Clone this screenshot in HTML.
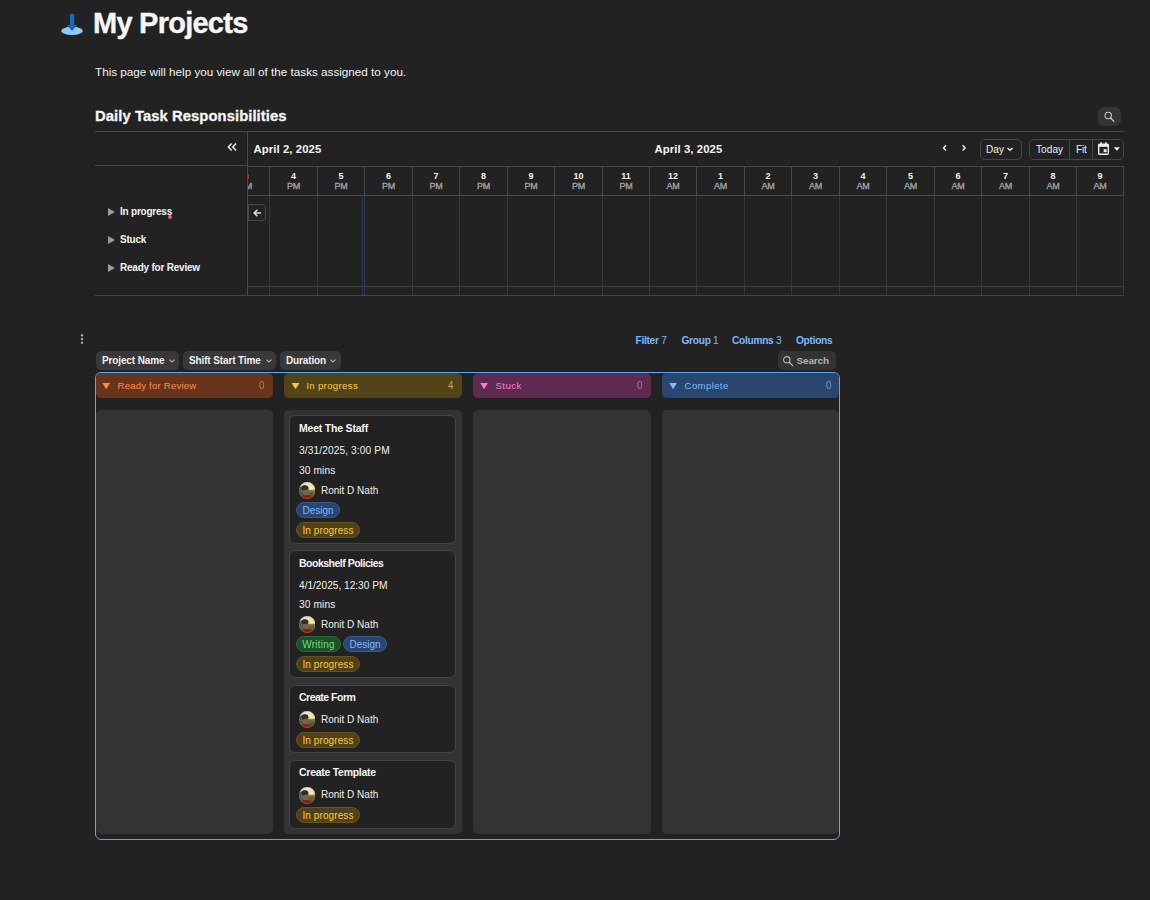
<!DOCTYPE html>
<html lang="en">
<head>
<meta charset="utf-8">
<title>My Projects</title>
<style>
*{box-sizing:border-box;margin:0;padding:0}
html,body{width:1150px;height:900px;overflow:hidden;background:#222222;color:#f2f2f2;
 font-family:"Liberation Sans",sans-serif;}
.a{position:absolute;white-space:nowrap}
.b{font-weight:bold}
.hl{position:absolute;height:1px;background:#464646}
.vl{position:absolute;width:1px;background:#3e3e3e}
/* gantt */
.th{position:absolute;top:171px;width:47px;text-align:center;font-size:9px;line-height:10px;font-weight:bold;color:#f2f2f2}
.th span{display:block;font-weight:normal;color:#a4a4a4;margin-top:0px;-webkit-text-stroke:0.3px #a4a4a4;letter-spacing:-0.2px}
.grp{position:absolute;left:120px;font-size:10px;font-weight:bold;line-height:14px;letter-spacing:-0.22px;color:#f5f5f5}
.tri{position:absolute;left:108px;width:0;height:0;border-left:7px solid #9c9c9c;border-top:4px solid transparent;border-bottom:4px solid transparent}
/* board */
.tb{position:absolute;top:334px;font-size:10.2px;line-height:13px;font-weight:bold;color:#7ab8ff;letter-spacing:-0.3px}
.tb i{font-style:normal;font-weight:normal}
.pill{position:absolute;top:351px;height:19px;border-radius:5px;background:#383838;font-size:10px;line-height:19px;font-weight:bold;color:#f0f0f0;padding-left:6px;letter-spacing:-0.13px}
.colh{position:absolute;top:373px;height:25px;width:177px;border-radius:5px;font-size:10px;line-height:25px}
.colh .t{position:absolute;left:6.2px;top:9.7px;width:8px;height:6.5px;background:currentColor;clip-path:polygon(0 0,100% 0,50% 100%)}
.colh .n{position:absolute;left:21.5px;top:0;font-size:9.6px;letter-spacing:0.2px}
.colh .c{position:absolute;right:8.5px;top:0;opacity:.72}
.colb{position:absolute;top:410px;height:424px;width:177px;border-radius:5px;background:#333333}
.card{position:absolute;left:289px;width:167px;background:#222222;border:1px solid #444444;border-radius:6px}
.card .ti{position:absolute;left:9px;top:5px;font-size:10.5px;font-weight:bold;line-height:14px;letter-spacing:-0.2px;color:#f5f5f5}
.card .tx{position:absolute;left:9px;font-size:10.2px;line-height:14px;color:#f0f0f0;letter-spacing:0.1px}
.card .av{position:absolute;left:9px;width:16.4px;height:16.9px}
.card .nm{position:absolute;left:31px;font-size:10px;line-height:14px;color:#f0f0f0}
.tag{position:absolute;height:16px;border-radius:8px;font-size:10px;line-height:16px;text-align:center;border:1px solid}
.tg-d{background:#2a466f;border-color:#375a8b;color:#78b6ff}
.tg-w{background:#1d5229;border-color:#2a6b37;color:#6fdc7f;letter-spacing:0.2px}
.tg-p{background:#504118;border-color:#67541f;color:#ffc83a;letter-spacing:0.1px}
</style>
</head>
<body>
<!-- ===== Title ===== -->
<svg class="a" style="left:60px;top:12px" width="24" height="24" viewBox="0 0 24 24">
  <ellipse cx="12.05" cy="18.9" rx="10.85" ry="4.1" fill="#90caf9"/>
  <rect x="9.9" y="2" width="4.3" height="11.6" fill="#1868cb"/>
  <path d="M6.9 13.1 L17.2 13.1 L12.05 18.9 Z" fill="#1565c0"/>
</svg>
<div class="a b" style="left:93px;top:5px;font-size:29px;line-height:36px;letter-spacing:-0.75px;color:#f7f7f7;-webkit-text-stroke:0.4px #f7f7f7">My Projects</div>
<div class="a" style="left:95px;top:64px;font-size:11.7px;line-height:16px;color:#f2f2f2">This page will help you view all of the tasks assigned to you.</div>

<!-- ===== Gantt ===== -->
<div class="a b" style="left:95px;top:106px;font-size:14.8px;line-height:20px;letter-spacing:0.07px;-webkit-text-stroke:0.3px #f5f5f5;color:#f5f5f5">Daily Task Responsibilities</div>
<div class="a" style="left:1098px;top:107px;width:23px;height:19px;border-radius:6px;background:#343434">
  <svg width="23" height="19" viewBox="0 0 23 19"><circle cx="10.2" cy="8.5" r="3.2" fill="none" stroke="#c8c8c8" stroke-width="1.1"/><path d="M12.6 11 L15.8 14.2" stroke="#c8c8c8" stroke-width="1.3" stroke-linecap="round"/></svg>
</div>
<div class="hl" style="left:95px;top:131px;width:1029px"></div>
<div class="hl" style="left:95px;top:165px;width:153px"></div>
<div class="hl" style="left:248px;top:166px;width:876px"></div>
<div class="hl" style="left:248px;top:195px;width:876px;background:#484848"></div>
<div class="hl" style="left:248px;top:286px;width:876px;background:#424242"></div>
<div class="hl" style="left:95px;top:295px;width:1029px"></div>
<div class="vl" style="left:247px;top:131px;height:165px;background:#4a4a4a"></div>
<div class="vl" style="left:269px;top:166px;height:30px;background:#484848"></div><div class="vl" style="left:269px;top:196px;height:99px;background:#383838"></div>
<div class="vl" style="left:317px;top:166px;height:30px;background:#484848"></div><div class="vl" style="left:317px;top:196px;height:99px;background:#383838"></div>
<div class="vl" style="left:364px;top:166px;height:30px;background:#484848"></div><div class="vl" style="left:364px;top:196px;height:99px;background:#383838"></div>
<div class="vl" style="left:412px;top:166px;height:30px;background:#484848"></div><div class="vl" style="left:412px;top:196px;height:99px;background:#383838"></div>
<div class="vl" style="left:459px;top:166px;height:30px;background:#484848"></div><div class="vl" style="left:459px;top:196px;height:99px;background:#383838"></div>
<div class="vl" style="left:507px;top:166px;height:30px;background:#484848"></div><div class="vl" style="left:507px;top:196px;height:99px;background:#383838"></div>
<div class="vl" style="left:554px;top:166px;height:30px;background:#484848"></div><div class="vl" style="left:554px;top:196px;height:99px;background:#383838"></div>
<div class="vl" style="left:602px;top:166px;height:30px;background:#484848"></div><div class="vl" style="left:602px;top:196px;height:99px;background:#383838"></div>
<div class="vl" style="left:649px;top:166px;height:30px;background:#484848"></div><div class="vl" style="left:649px;top:196px;height:99px;background:#383838"></div>
<div class="vl" style="left:696px;top:166px;height:30px;background:#484848"></div><div class="vl" style="left:696px;top:196px;height:99px;background:#383838"></div>
<div class="vl" style="left:744px;top:166px;height:30px;background:#484848"></div><div class="vl" style="left:744px;top:196px;height:99px;background:#383838"></div>
<div class="vl" style="left:791px;top:166px;height:30px;background:#484848"></div><div class="vl" style="left:791px;top:196px;height:99px;background:#383838"></div>
<div class="vl" style="left:839px;top:166px;height:30px;background:#484848"></div><div class="vl" style="left:839px;top:196px;height:99px;background:#383838"></div>
<div class="vl" style="left:886px;top:166px;height:30px;background:#484848"></div><div class="vl" style="left:886px;top:196px;height:99px;background:#383838"></div>
<div class="vl" style="left:934px;top:166px;height:30px;background:#484848"></div><div class="vl" style="left:934px;top:196px;height:99px;background:#383838"></div>
<div class="vl" style="left:981px;top:166px;height:30px;background:#484848"></div><div class="vl" style="left:981px;top:196px;height:99px;background:#383838"></div>
<div class="vl" style="left:1029px;top:166px;height:30px;background:#484848"></div><div class="vl" style="left:1029px;top:196px;height:99px;background:#383838"></div>
<div class="vl" style="left:1076px;top:166px;height:30px;background:#484848"></div><div class="vl" style="left:1076px;top:196px;height:99px;background:#383838"></div>
<div class="vl" style="left:1123px;top:166px;height:30px;background:#484848"></div><div class="vl" style="left:1123px;top:196px;height:99px;background:#383838"></div>
<div class="th" style="left:270px;width:47px">4<span>PM</span></div>
<div class="th" style="left:318px;width:46px">5<span>PM</span></div>
<div class="th" style="left:365px;width:47px">6<span>PM</span></div>
<div class="th" style="left:413px;width:46px">7<span>PM</span></div>
<div class="th" style="left:460px;width:47px">8<span>PM</span></div>
<div class="th" style="left:508px;width:46px">9<span>PM</span></div>
<div class="th" style="left:555px;width:47px">10<span>PM</span></div>
<div class="th" style="left:603px;width:46px">11<span>PM</span></div>
<div class="th" style="left:650px;width:46px">12<span>AM</span></div>
<div class="th" style="left:697px;width:47px">1<span>AM</span></div>
<div class="th" style="left:745px;width:46px">2<span>AM</span></div>
<div class="th" style="left:792px;width:47px">3<span>AM</span></div>
<div class="th" style="left:840px;width:46px">4<span>AM</span></div>
<div class="th" style="left:887px;width:47px">5<span>AM</span></div>
<div class="th" style="left:935px;width:46px">6<span>AM</span></div>
<div class="th" style="left:982px;width:47px">7<span>AM</span></div>
<div class="th" style="left:1030px;width:46px">8<span>AM</span></div>
<div class="th" style="left:1077px;width:46px">9<span>AM</span></div>
<!-- partial 3 PM column clipped -->
<div class="a" style="left:248px;top:167px;width:21px;height:28px;overflow:hidden">
  <div class="th" style="left:-26px;top:4px">3<span>PM</span></div>
</div>
<div class="a" style="left:248px;top:174px;width:1px;height:5px;background:#b8402a;opacity:.75"></div>
<!-- today line -->
<div class="vl" style="left:362px;top:196px;height:99px;background:#1c3761"></div>
<!-- header controls -->
<svg class="a" style="left:226px;top:141px" width="12" height="12" viewBox="0 0 12 12"><path d="M5.7 2.4 L2.3 5.9 L5.7 9.4 M10.1 2.4 L6.7 5.9 L10.1 9.4" fill="none" stroke="#ececec" stroke-width="1.5"/></svg>
<div class="a b" style="left:253.5px;top:142px;font-size:11.3px;line-height:14px;letter-spacing:0.1px;color:#f5f5f5">April 2, 2025</div>
<div class="a b" style="left:654.5px;top:142px;font-size:11.3px;line-height:14px;letter-spacing:0.1px;color:#f5f5f5">April 3, 2025</div>
<svg class="a" style="left:940px;top:143px" width="30" height="10" viewBox="0 0 30 10"><path d="M6 2.2 L3.5 4.9 L6 7.6" fill="none" stroke="#e6e6e6" stroke-width="1.5"/><path d="M22.6 2.2 L25.1 4.9 L22.6 7.6" fill="none" stroke="#e6e6e6" stroke-width="1.5"/></svg>
<div class="a" style="left:980px;top:139px;width:42px;height:21px;border:1px solid #454545;border-radius:5px"></div>
<div class="a" style="left:986px;top:143px;font-size:10px;line-height:13px;letter-spacing:0.1px;color:#f0f0f0">Day</div>
<svg class="a" style="left:1005px;top:146px" width="9" height="7" viewBox="0 0 9 7"><path d="M2.5 1.9 L5 4.3 L7.5 1.9" fill="none" stroke="#e6e6e6" stroke-width="1.4"/></svg>
<div class="a" style="left:1029px;top:139px;width:95px;height:21px;border:1px solid #454545;border-radius:5px"></div>
<div class="vl" style="left:1069px;top:140px;height:19px;background:#454545"></div>
<div class="vl" style="left:1092px;top:140px;height:19px;background:#454545"></div>
<div class="a" style="left:1036px;top:143px;font-size:10px;line-height:13px;letter-spacing:0.1px;color:#f0f0f0">Today</div>
<div class="a" style="left:1076px;top:143px;font-size:10px;line-height:13px;letter-spacing:-0.2px;color:#f0f0f0">Fit</div>
<svg class="a" style="left:1097px;top:141px" width="26" height="16" viewBox="0 0 26 16"><rect x="1.7" y="3.2" width="9.6" height="10" rx="1" fill="none" stroke="#f0f0f0" stroke-width="1.4"/><rect x="1.7" y="3.2" width="9.6" height="2.6" fill="#f0f0f0"/><rect x="3.4" y="1.2" width="1.4" height="2.4" fill="#f0f0f0"/><rect x="8.2" y="1.2" width="1.4" height="2.4" fill="#f0f0f0"/><rect x="6.6" y="8.2" width="3" height="3" fill="#f0f0f0"/><path d="M16.8 6.3 L22.9 6.3 L19.85 9.7 Z" fill="#f0f0f0"/></svg>
<!-- groups -->
<div class="tri" style="top:208px"></div><div class="grp" style="top:205px">In progress</div>
<div class="tri" style="top:236px"></div><div class="grp" style="top:233px">Stuck</div>
<div class="tri" style="top:264px"></div><div class="grp" style="top:261px">Ready for Review</div>
<div class="a" style="left:168px;top:215.4px;width:4px;height:4px;border-radius:50%;background:#ea5f78"></div>
<!-- back arrow button -->
<div class="a" style="left:248px;top:204px;width:18px;height:17px;border:1px solid #484848;border-radius:0 4px 4px 0;background:#222"></div>
<svg class="a" style="left:251px;top:208px" width="12" height="10" viewBox="0 0 12 10"><path d="M10 5 L3.6 5 M6.4 1.7 L3.1 5 L6.4 8.3" fill="none" stroke="#e0e0e0" stroke-width="1.4"/></svg>


<!-- ===== Board ===== -->
<svg width="0" height="0" style="position:absolute"><defs>
<linearGradient id="sky" x1="0" y1="0" x2="0" y2="1"><stop offset="0" stop-color="#dcdde0"/><stop offset="0.25" stop-color="#ebe4d4"/><stop offset="0.42" stop-color="#eed79a"/><stop offset="0.46" stop-color="#8f824f"/><stop offset="0.6" stop-color="#5a6635"/><stop offset="1" stop-color="#3f4a2a"/></linearGradient>
<radialGradient id="sun" cx="12.2" cy="6.2" r="4.2" gradientUnits="userSpaceOnUse"><stop offset="0" stop-color="#fff6c4"/><stop offset="0.5" stop-color="#f6e08e" stop-opacity="0.7"/><stop offset="1" stop-color="#f3dc8c" stop-opacity="0"/></radialGradient>
<clipPath id="avc"><circle cx="8.2" cy="8.2" r="8.2"/></clipPath>
<filter id="avb" x="-10%" y="-10%" width="120%" height="120%"><feGaussianBlur stdDeviation="0.75"/></filter>
</defs></svg>
<svg class="a" style="left:78.5px;top:333px" width="6" height="12" viewBox="0 0 6 12"><circle cx="3" cy="2.3" r="1.2" fill="#a6a6a6"/><circle cx="3" cy="6" r="1.2" fill="#a6a6a6"/><circle cx="3" cy="9.7" r="1.2" fill="#a6a6a6"/></svg>
<div class="tb" style="left:635.5px">Filter <i>7</i></div>
<div class="tb" style="left:681.5px">Group <i>1</i></div>
<div class="tb" style="left:732px">Columns <i>3</i></div>
<div class="tb" style="left:796px">Options</div>
<div class="pill" style="left:96px;width:83px">Project Name</div>
<div class="pill" style="left:183px;width:93px">Shift Start Time</div>
<div class="pill" style="left:280px;width:61px">Duration</div>
<svg class="a" style="left:167.5px;top:358px" width="8" height="6" viewBox="0 0 8 6"><path d="M1.4 1.6 L4 4 L6.6 1.6" fill="none" stroke="#b0b0b0" stroke-width="1.1"/></svg>
<svg class="a" style="left:264.5px;top:358px" width="8" height="6" viewBox="0 0 8 6"><path d="M1.4 1.6 L4 4 L6.6 1.6" fill="none" stroke="#b0b0b0" stroke-width="1.1"/></svg>
<svg class="a" style="left:329px;top:358px" width="8" height="6" viewBox="0 0 8 6"><path d="M1.4 1.6 L4 4 L6.6 1.6" fill="none" stroke="#b0b0b0" stroke-width="1.1"/></svg>
<div class="a" style="left:778px;top:351px;width:58px;height:19px;border-radius:5px;background:#333"></div>
<svg class="a" style="left:782px;top:355px" width="12" height="12" viewBox="0 0 12 12"><circle cx="4.8" cy="4.8" r="3.2" fill="none" stroke="#bdbdbd" stroke-width="1.1"/><path d="M7.2 7.2 L10.5 10.5" stroke="#bdbdbd" stroke-width="1.2" stroke-linecap="round"/></svg>
<div class="a b" style="left:796.5px;top:354px;font-size:9.9px;line-height:13px;color:#b4b4b4;letter-spacing:-0.1px">Search</div>
<div class="a" style="left:95px;top:372px;width:745px;height:468px;border:1px solid #56a8f7;border-radius:6px"></div>
<div class="colh" style="left:96px;background:#66351b;color:#ff8a4c"><div class="t"></div><div class="n">Ready for Review</div><div class="c">0</div></div>
<div class="colh" style="left:284px;width:178px;background:#524318;color:#ffc83a"><div class="t" style="left:7.5px"></div><div class="n" style="left:22.2px;letter-spacing:0.35px">In progress</div><div class="c">4</div></div>
<div class="colh" style="left:473px;width:178px;background:#5c2b4f;color:#ff78d4"><div class="t" style="left:7.1px"></div><div class="n" style="left:22.5px;letter-spacing:0.45px">Stuck</div><div class="c">0</div></div>
<div class="colh" style="left:662px;background:#2a456e;color:#7fbcff"><div class="t" style="left:7.1px"></div><div class="n" style="left:22.6px;letter-spacing:0.37px">Complete</div><div class="c" style="right:7.5px">0</div></div>
<div class="colb" style="left:96px"></div>
<div class="colb" style="left:284px;width:178px"></div>
<div class="colb" style="left:473px;width:178px"></div>
<div class="colb" style="left:662px"></div>
<div class="card" style="top:415px;height:129px">
<div class="ti" style="top:5px">Meet The Staff</div>
<div class="tx" style="top:28px">3/31/2025, 3:00 PM</div>
<div class="tx" style="top:48px">30 mins</div>
<div class="av" style="top:66px"><svg width="16.4" height="16.9" viewBox="0 0 16.4 16.4" preserveAspectRatio="none"><g clip-path="url(#avc)"><g filter="url(#avb)"><rect x="-1" y="-1" width="19" height="19" fill="url(#sky)"/><rect x="-1" y="4.6" width="3.4" height="14" fill="#4b564b"/><rect x="7.5" y="0" width="10" height="7.4" fill="url(#sun)"/><ellipse cx="5.85" cy="6" rx="3.6" ry="2.9" fill="#3a3331"/><ellipse cx="6.9" cy="10.1" rx="3.1" ry="3.2" fill="#7a5f53"/><ellipse cx="5.7" cy="5.5" rx="3.3" ry="2.2" fill="#332d2b"/><path d="M2.4 17 L3 13.6 Q4 12.2 6 12.7 L7.3 13.9 L9 12.7 Q11.8 12.5 12.8 14.2 L13.6 17 Z" fill="#951a1a"/><ellipse cx="7.3" cy="13.6" rx="1" ry="0.6" fill="#3a1a18"/></g></g><circle cx="8.2" cy="8.2" r="7.95" fill="none" stroke="#c9a032" stroke-width="0.5" opacity="0.7"/></svg></div><div class="nm" style="top:67.5px">Ronit D Nath</div>
<div class="tag tg-d" style="top:86px;left:6px;width:44px">Design</div>
<div class="tag tg-p" style="top:106px;left:6px;width:64px">In progress</div>
</div>
<div class="card" style="top:550px;height:128px">
<div class="ti" style="top:5px;letter-spacing:-0.5px">Bookshelf Policies</div>
<div class="tx" style="top:28px;letter-spacing:-0.03px">4/1/2025, 12:30 PM</div>
<div class="tx" style="top:47px">30 mins</div>
<div class="av" style="top:65px"><svg width="16.4" height="16.9" viewBox="0 0 16.4 16.4" preserveAspectRatio="none"><g clip-path="url(#avc)"><g filter="url(#avb)"><rect x="-1" y="-1" width="19" height="19" fill="url(#sky)"/><rect x="-1" y="4.6" width="3.4" height="14" fill="#4b564b"/><rect x="7.5" y="0" width="10" height="7.4" fill="url(#sun)"/><ellipse cx="5.85" cy="6" rx="3.6" ry="2.9" fill="#3a3331"/><ellipse cx="6.9" cy="10.1" rx="3.1" ry="3.2" fill="#7a5f53"/><ellipse cx="5.7" cy="5.5" rx="3.3" ry="2.2" fill="#332d2b"/><path d="M2.4 17 L3 13.6 Q4 12.2 6 12.7 L7.3 13.9 L9 12.7 Q11.8 12.5 12.8 14.2 L13.6 17 Z" fill="#951a1a"/><ellipse cx="7.3" cy="13.6" rx="1" ry="0.6" fill="#3a1a18"/></g></g><circle cx="8.2" cy="8.2" r="7.95" fill="none" stroke="#c9a032" stroke-width="0.5" opacity="0.7"/></svg></div><div class="nm" style="top:67px">Ronit D Nath</div>
<div class="tag tg-w" style="top:85px;left:6px;width:45px">Writing</div>
<div class="tag tg-d" style="top:85px;left:53px;width:44px">Design</div>
<div class="tag tg-p" style="top:105px;left:6px;width:64px">In progress</div>
</div>
<div class="card" style="top:685px;height:68px">
<div class="ti" style="top:4px;letter-spacing:-0.5px">Create Form</div>
<div class="av" style="top:25px"><svg width="16.4" height="16.9" viewBox="0 0 16.4 16.4" preserveAspectRatio="none"><g clip-path="url(#avc)"><g filter="url(#avb)"><rect x="-1" y="-1" width="19" height="19" fill="url(#sky)"/><rect x="-1" y="4.6" width="3.4" height="14" fill="#4b564b"/><rect x="7.5" y="0" width="10" height="7.4" fill="url(#sun)"/><ellipse cx="5.85" cy="6" rx="3.6" ry="2.9" fill="#3a3331"/><ellipse cx="6.9" cy="10.1" rx="3.1" ry="3.2" fill="#7a5f53"/><ellipse cx="5.7" cy="5.5" rx="3.3" ry="2.2" fill="#332d2b"/><path d="M2.4 17 L3 13.6 Q4 12.2 6 12.7 L7.3 13.9 L9 12.7 Q11.8 12.5 12.8 14.2 L13.6 17 Z" fill="#951a1a"/><ellipse cx="7.3" cy="13.6" rx="1" ry="0.6" fill="#3a1a18"/></g></g><circle cx="8.2" cy="8.2" r="7.95" fill="none" stroke="#c9a032" stroke-width="0.5" opacity="0.7"/></svg></div><div class="nm" style="top:27px">Ronit D Nath</div>
<div class="tag tg-p" style="top:46px;left:6px;width:64px">In progress</div>
</div>
<div class="card" style="top:760px;height:69px">
<div class="ti" style="top:4px;letter-spacing:-0.27px">Create Template</div>
<div class="av" style="top:26px"><svg width="16.4" height="16.9" viewBox="0 0 16.4 16.4" preserveAspectRatio="none"><g clip-path="url(#avc)"><g filter="url(#avb)"><rect x="-1" y="-1" width="19" height="19" fill="url(#sky)"/><rect x="-1" y="4.6" width="3.4" height="14" fill="#4b564b"/><rect x="7.5" y="0" width="10" height="7.4" fill="url(#sun)"/><ellipse cx="5.85" cy="6" rx="3.6" ry="2.9" fill="#3a3331"/><ellipse cx="6.9" cy="10.1" rx="3.1" ry="3.2" fill="#7a5f53"/><ellipse cx="5.7" cy="5.5" rx="3.3" ry="2.2" fill="#332d2b"/><path d="M2.4 17 L3 13.6 Q4 12.2 6 12.7 L7.3 13.9 L9 12.7 Q11.8 12.5 12.8 14.2 L13.6 17 Z" fill="#951a1a"/><ellipse cx="7.3" cy="13.6" rx="1" ry="0.6" fill="#3a1a18"/></g></g><circle cx="8.2" cy="8.2" r="7.95" fill="none" stroke="#c9a032" stroke-width="0.5" opacity="0.7"/></svg></div><div class="nm" style="top:27px">Ronit D Nath</div>
<div class="tag tg-p" style="top:46px;left:6px;width:64px">In progress</div>
</div>
</body>
</html>
